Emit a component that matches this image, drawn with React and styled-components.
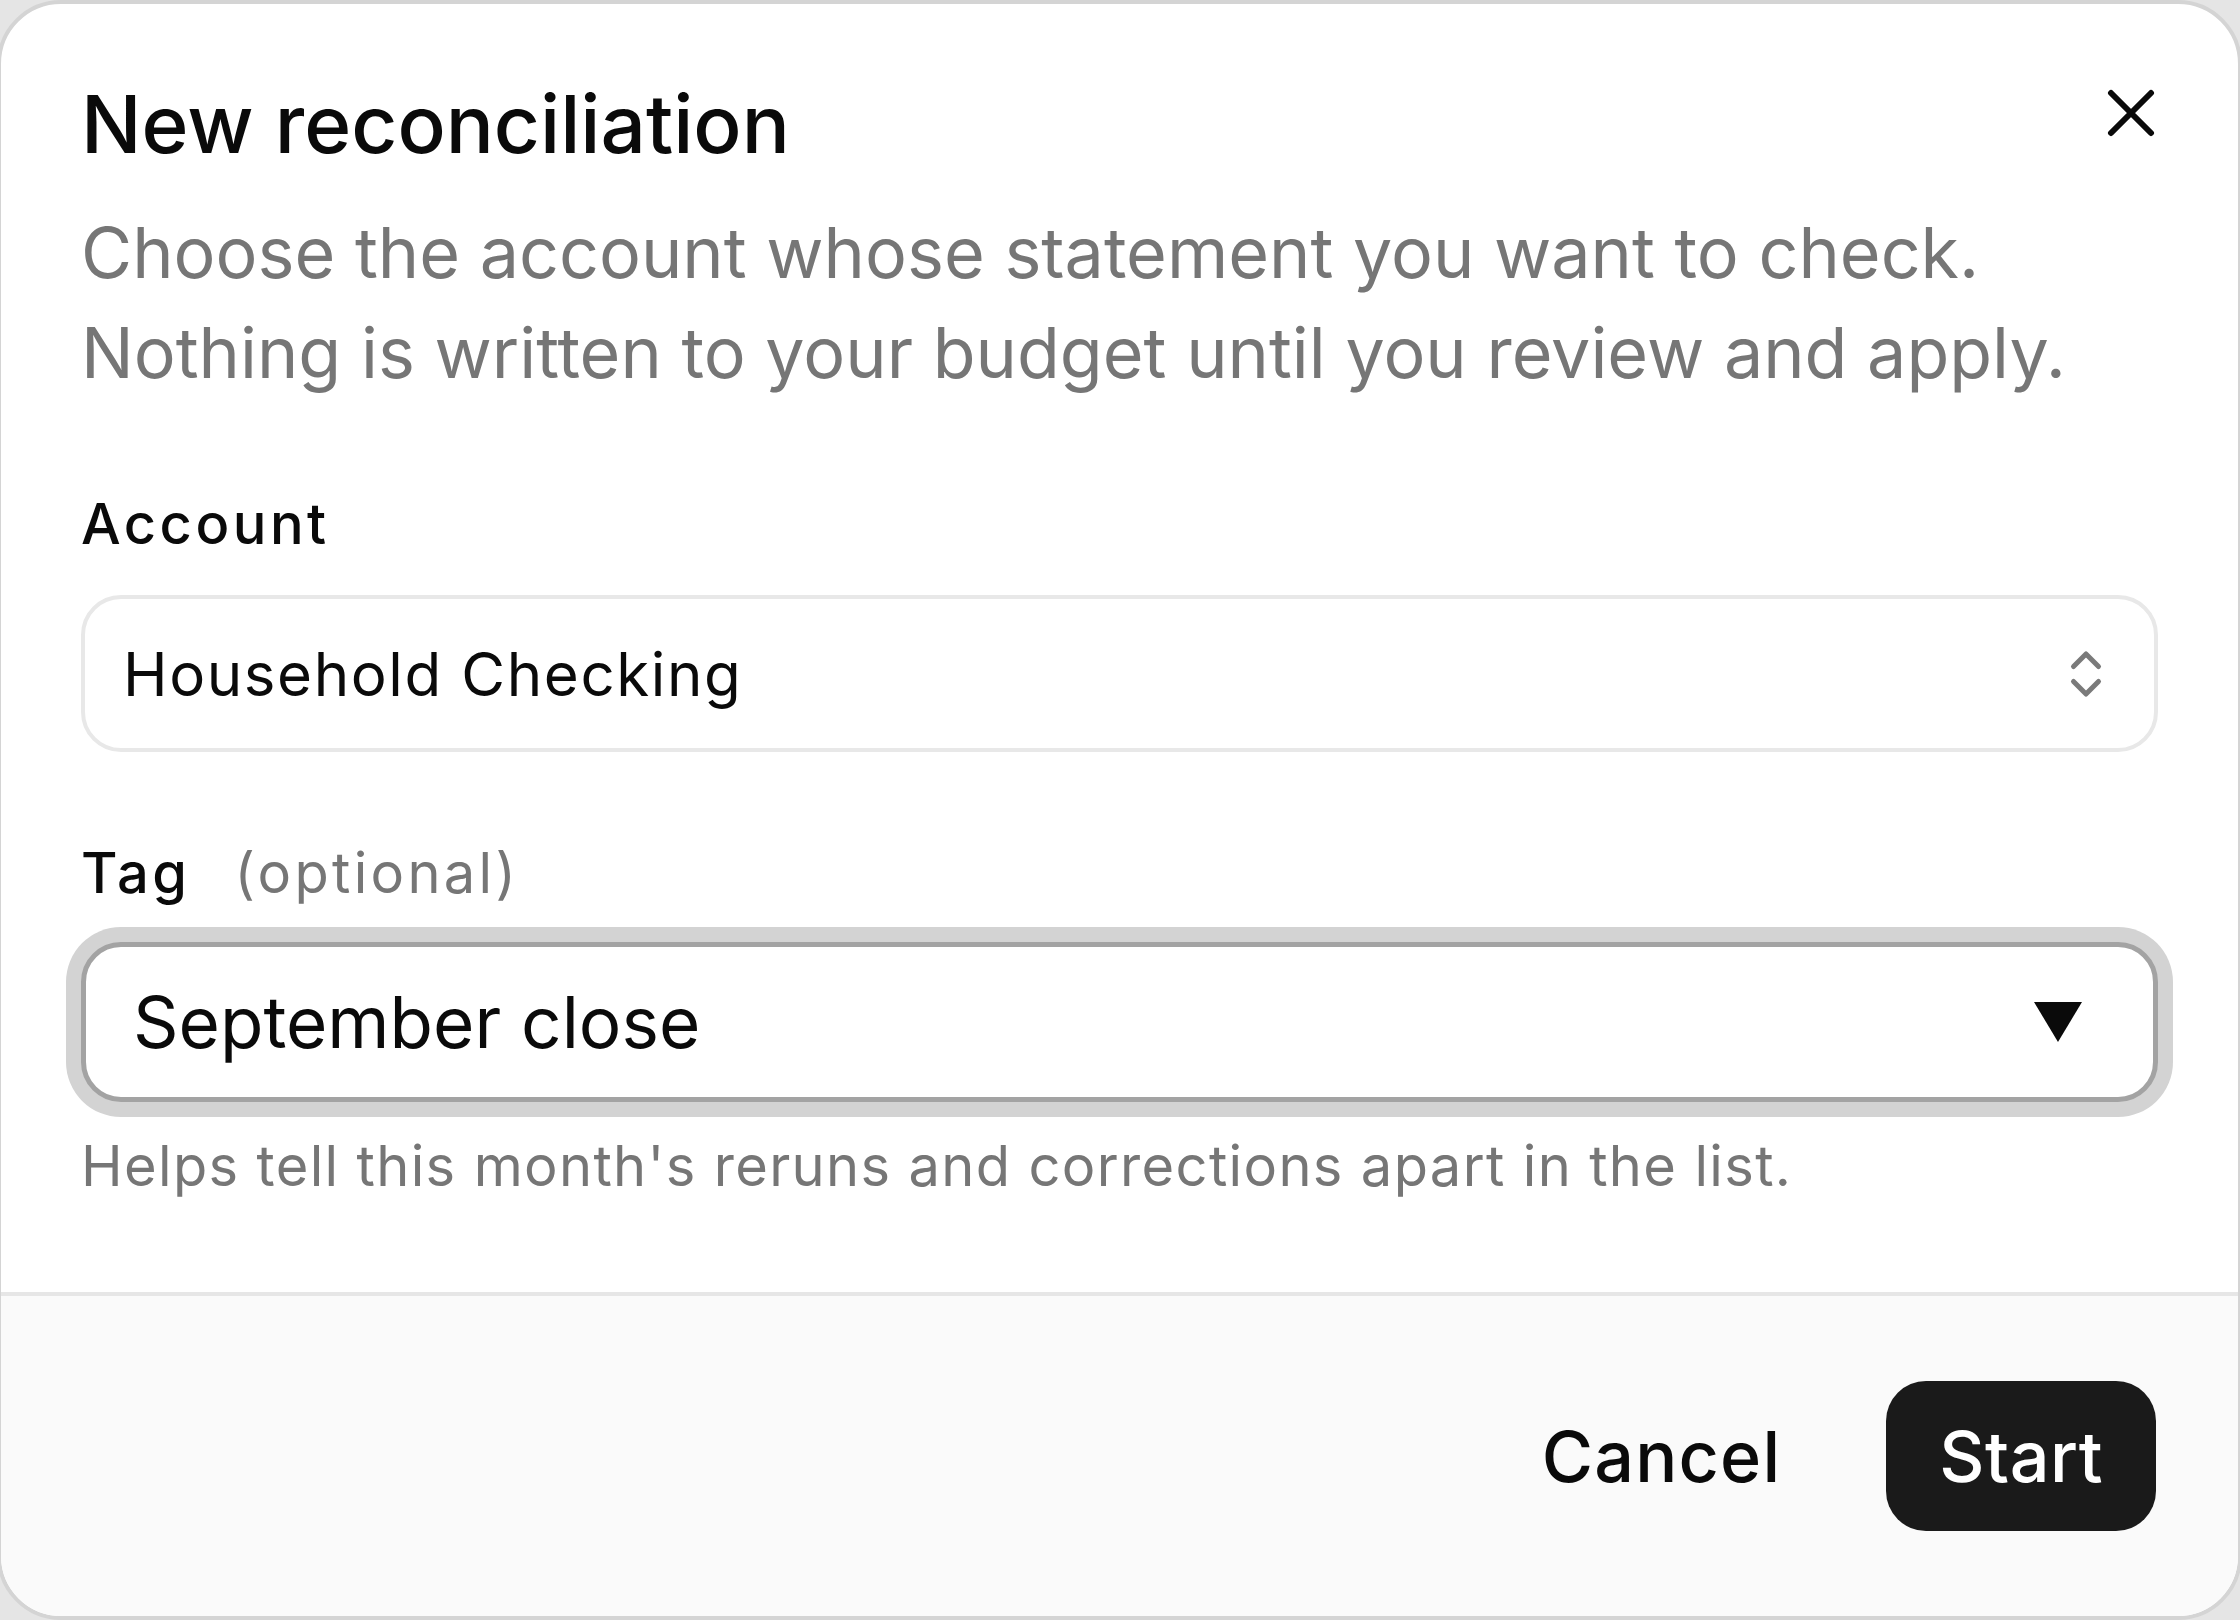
import React from "react";
import styled, { createGlobalStyle } from "styled-components";
import { ChevronsUpDown } from "lucide-react";

const GlobalStyle = createGlobalStyle`
  html, body {
    margin: 0;
    padding: 0;
    background: #e5e5e5;
  }
  * {
    box-sizing: border-box;
  }
`;

const Dialog = styled.div`
  width: 2245px;
  height: 1620px;
  margin-left: -3px;
  display: flex;
  flex-direction: column;
  background: #ffffff;
  border: 4px solid #d4d4d4;
  border-radius: 64px;
  overflow: hidden;
  font-family: Inter, "Noto Sans", sans-serif;
  color: #0a0a0a;
`;

const Body = styled.div`
  display: flex;
  flex-direction: column;
  padding: 72px 80px 87px;
`;

const Header = styled.div`
  display: flex;
  justify-content: space-between;
  align-items: flex-start;
`;

const Title = styled.h2`
  margin: 0;
  font-size: 80px;
  line-height: 96px;
  font-weight: 500;
  color: #0a0a0a;
`;

const CloseButton = styled.button`
  margin-top: 13px;
  margin-right: 3px;
  width: 48px;
  height: 48px;
  padding: 0;
  border: none;
  background: none;
  color: #0a0a0a;
  cursor: pointer;
  display: flex;
`;

const Description = styled.p`
  margin: 31px 0 0;
  font-size: 70px;
  line-height: 100px;
  color: #767676;
`;

const Field = styled.div`
  display: flex;
  flex-direction: column;
  margin-top: 82px;
`;

const Label = styled.label`
  font-size: 56px;
  line-height: 78px;
  font-weight: 500;
  letter-spacing: 3.5px;
  color: #0a0a0a;
  margin-bottom: ${(p) => p.$gap || 32}px;
`;

const Optional = styled.span`
  margin-left: 44px;
  font-weight: 400;
  letter-spacing: 3.3px;
  color: #767676;
`;

const SelectBox = styled.div`
  height: 157px;
  display: flex;
  align-items: center;
  justify-content: space-between;
  padding: 0 38px 0 38px;
  border: 4px solid #e8e8e8;
  border-radius: 40px;
  background: #ffffff;
  font-size: 60px;
  letter-spacing: 1.6px;
  color: #0a0a0a;
  cursor: pointer;
`;

const TagSelect = styled.div`
  height: 160px;
  display: flex;
  align-items: center;
  justify-content: space-between;
  padding: 0 71px 0 47px;
  border: 5px solid #a3a3a3;
  border-radius: 40px;
  box-shadow: 0 0 0 15px #d3d3d3;
  background: #ffffff;
  font-size: 71px;
  color: #0a0a0a;
  cursor: pointer;
`;

const Hint = styled.p`
  margin: 25px 0 0;
  font-size: 56px;
  line-height: 78px;
  letter-spacing: 1.35px;
  color: #767676;
`;

const Footer = styled.div`
  flex: 1;
  display: flex;
  justify-content: flex-end;
  align-items: center;
  gap: 52px;
  padding: 0 82px 0 80px;
  background: #fafafa;
  border-top: 4px solid #e6e6e6;
`;

const Button = styled.button`
  height: 150px;
  padding: 0 53px;
  border: none;
  border-radius: 40px;
  font-family: Inter, "Noto Sans", sans-serif;
  font-size: 70px;
  font-weight: 500;
  letter-spacing: ${(p) => (p.$primary ? 0.5 : 1.2)}px;
  cursor: pointer;
  background: ${(p) => (p.$primary ? "#1a1a1a" : "transparent")};
  color: ${(p) => (p.$primary ? "#ffffff" : "#0a0a0a")};
`;

function CloseIcon() {
  return (
    <svg width="48" height="48" viewBox="0 0 48 48" fill="none">
      <path
        d="M4 4 L44 44 M44 4 L4 44"
        stroke="currentColor"
        strokeWidth="6"
        strokeLinecap="round"
      />
    </svg>
  );
}

function Caret() {
  return (
    <svg width="48" height="40" viewBox="0 0 48 40">
      <polygon points="0,0 48,0 24,40" fill="#0a0a0a" />
    </svg>
  );
}

export default function App() {
  return (
    <>
      <GlobalStyle />
      <Dialog>
        <Body>
          <Header>
            <Title>New reconciliation</Title>
            <CloseButton aria-label="Close">
              <CloseIcon />
            </CloseButton>
          </Header>
          <Description>
            Choose the account whose statement you want to check.
            <br />
            Nothing is written to your budget until you review and apply.
          </Description>

          <Field>
            <Label>Account</Label>
            <SelectBox>
              <span>Household Checking</span>
              <ChevronsUpDown size={60} strokeWidth={2} color="#7a7a7a" />
            </SelectBox>
          </Field>

          <Field>
            <Label $gap={30}>
              Tag<Optional>(optional)</Optional>
            </Label>
            <TagSelect>
              <span>September close</span>
              <Caret />
            </TagSelect>
            <Hint>Helps tell this month's reruns and corrections apart in the list.</Hint>
          </Field>
        </Body>
        <Footer>
          <Button>Cancel</Button>
          <Button $primary>Start</Button>
        </Footer>
      </Dialog>
    </>
  );
}
